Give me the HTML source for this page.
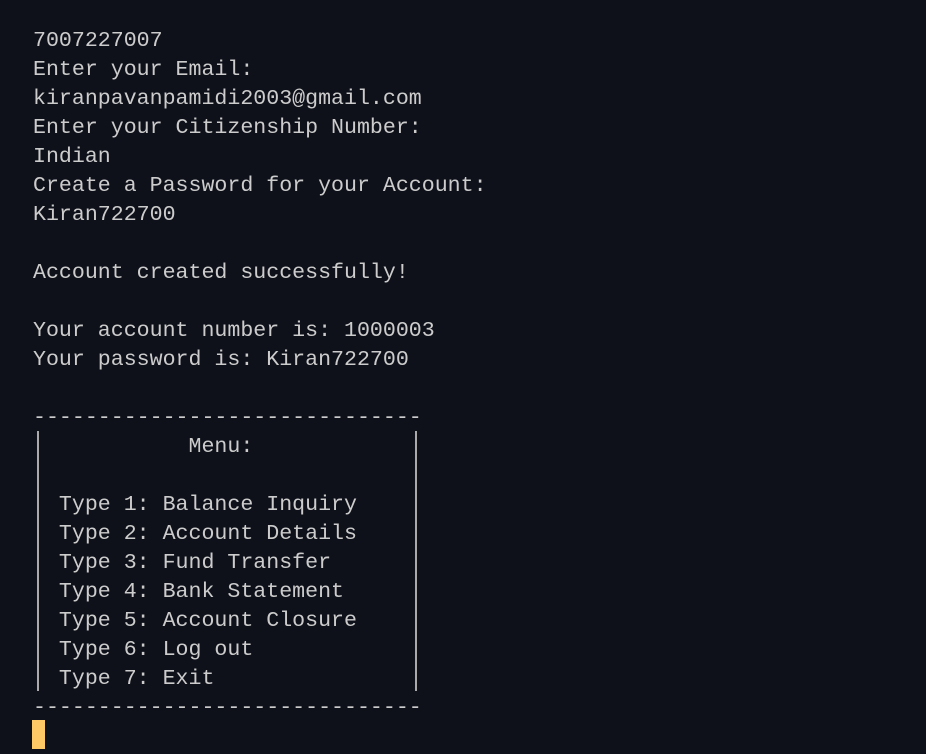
<!DOCTYPE html>
<html><head><meta charset="utf-8"><style>
html,body{margin:0;padding:0;background:#0e111a;width:926px;height:754px;overflow:hidden}
pre{position:absolute;left:33px;top:27px;margin:0;font-family:"Liberation Mono",monospace;font-size:21.6px;line-height:29px;color:#cccccc}
.b{position:absolute;width:2px;background:#aaaaaa;top:431px;height:260px}
.c{position:absolute;left:32px;top:720px;width:13px;height:29px;background:#ffc966}
</style></head><body>
<pre>7007227007
Enter your Email:
kiranpavanpamidi2003@gmail.com
Enter your Citizenship Number:
Indian
Create a Password for your Account:
Kiran722700

Account created successfully!

Your account number is: 1000003
Your password is: Kiran722700

------------------------------
            Menu:

  Type 1: Balance Inquiry
  Type 2: Account Details
  Type 3: Fund Transfer
  Type 4: Bank Statement
  Type 5: Account Closure
  Type 6: Log out
  Type 7: Exit
------------------------------</pre>
<div class="b" style="left:37px"></div>
<div class="b" style="left:415px"></div>
<div class="c"></div>
</body></html>
